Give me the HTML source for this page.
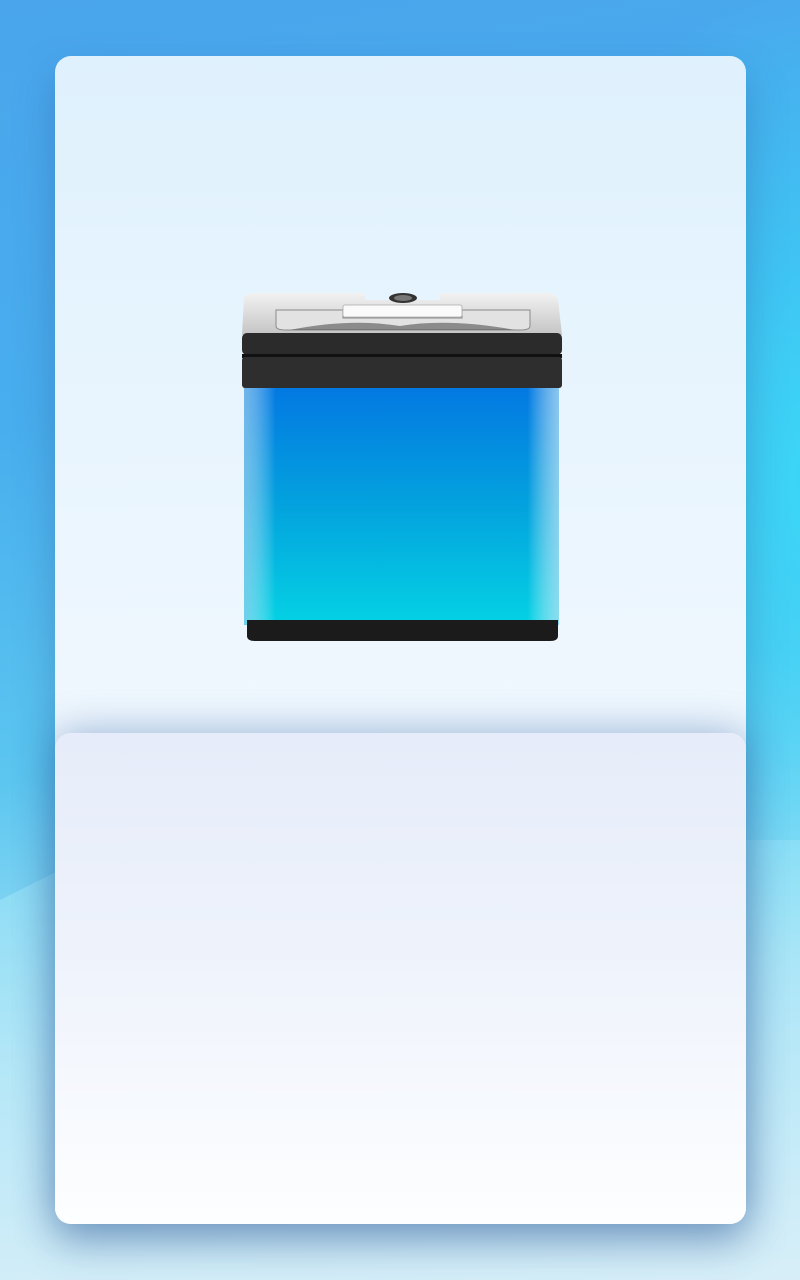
<!DOCTYPE html>
<html><head><meta charset="utf-8"><style>
*{margin:0;padding:0;box-sizing:border-box}
body{width:800px;height:1280px;overflow:hidden;position:relative;font-family:"Liberation Sans",sans-serif;
background:linear-gradient(170deg,#4aa5ec 0%,#48aeee 30%,#5cc6f0 55%,#a6e2f6 75%,#d8f0f9 100%);}
.bg1{position:absolute;inset:0;background:radial-gradient(ellipse 300px 500px at 820px 480px,rgba(56,216,248,.95),rgba(56,216,248,0));}
.bg2{position:absolute;left:0;top:840px;width:800px;height:440px;background:linear-gradient(180deg,rgba(150,228,248,.55),rgba(215,238,248,.7));clip-path:polygon(0 60px,120px 0,800px 0,800px 440px,0 440px);}
.card{position:absolute;left:55px;top:56px;width:691px;height:1168px;border-radius:16px;
background:linear-gradient(180deg,#dff1fd 0%,#eef7fe 50%,#f8fbff 100%);box-shadow:0 20px 40px rgba(40,80,140,.35);}
.panel{position:absolute;left:55px;top:733px;width:691px;height:491px;border-radius:16px;
background:linear-gradient(180deg,#e6ecf9 0%,#edf2fb 40%,#fdfeff 100%);box-shadow:0 0 40px rgba(40,90,160,.45);}
</style></head><body>
<div class="bg1"></div><div class="bg2"></div>
<div class="card">
<svg style="position:absolute;left:0;top:0" width="691" height="680" viewBox="55 56 691 680">
<defs>
<linearGradient id="blue" x1="0" y1="0" x2="0" y2="1"><stop offset="0" stop-color="#0378e2"/><stop offset=".5" stop-color="#03a2de"/><stop offset="1" stop-color="#04d2e4"/></linearGradient>
<linearGradient id="edge" x1="0" y1="0" x2="1" y2="0"><stop offset="0" stop-color="#9fd0ee" stop-opacity=".7"/><stop offset=".1" stop-color="#fff" stop-opacity="0"/><stop offset=".9" stop-color="#fff" stop-opacity="0"/><stop offset="1" stop-color="#b8e0f2" stop-opacity=".75"/></linearGradient>
<linearGradient id="silver" x1="0" y1="0" x2="0" y2="1"><stop offset="0" stop-color="#f2f2f2"/><stop offset="1" stop-color="#c4c4c4"/></linearGradient>
</defs>
<rect x="244" y="385" width="315" height="240" fill="url(#blue)"/>
<rect x="244" y="385" width="315" height="240" fill="url(#edge)"/>
<path d="M247 620 H558 V636 Q558 641 550 641 H255 Q247 641 247 636Z" fill="#1b1b1b"/>
<path d="M244 298 Q246 293 256 293 H365 V300 H440 V293 H548 Q556 293 558 300 L562 335 H242Z" fill="url(#silver)"/>
<path d="M276 310 H343 V318 H462 V310 H530 V326 Q530 330 520 330 H286 Q276 330 276 326Z" fill="#e2e2e2" stroke="#8a8a8a" stroke-width="1"/>
<rect x="343" y="305" width="119" height="12" rx="2" fill="#fafafa" stroke="#aaa" stroke-width=".8"/>
<path d="M290 330 Q350 318 400 326 Q450 318 515 330Z" fill="#444" opacity=".55"/>
<ellipse cx="403" cy="298" rx="14" ry="5" fill="#333"/>
<ellipse cx="403" cy="298" rx="9" ry="3" fill="#777"/>
<rect x="242" y="333" width="320" height="22" rx="5" fill="#2b2b2b"/>
<rect x="242" y="354" width="320" height="4" fill="#111"/>
<rect x="242" y="357" width="320" height="31" rx="3" fill="#2e2e2e"/>
</svg>
</div>
<div class="panel"></div>
</body></html>
